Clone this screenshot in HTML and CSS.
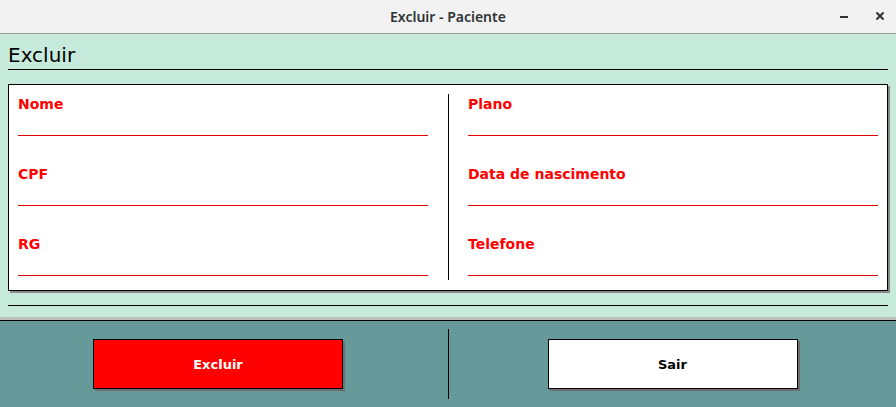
FILE: index.html
```html
<!DOCTYPE html>
<html lang="pt">
<head>
    <meta charset="UTF-8">
    <meta name="viewport" content="width=device-width, initial-scale=1.0">
    <title>Excluir - Paciente</title>
    <link rel="stylesheet" href="styles.css">
</head>
<body>
    <div class="janela">
        <div class="barra-titulo">
            <span class="titulo">Excluir - Paciente</span>
            <div class="controles-janela">
                <svg class="icone" width="16" height="16" viewBox="0 0 16 16">
                    <rect x="4" y="8" width="8" height="2" fill="#2e3436"/>
                </svg>
                <svg class="icone" width="16" height="16" viewBox="0 0 16 16">
                    <path d="M4.5 4.5 L11.5 11.5 M11.5 4.5 L4.5 11.5" stroke="#2e3436" stroke-width="2" fill="none"/>
                </svg>
            </div>
        </div>

        <div class="painel">
            <h1 class="cabecalho">Excluir</h1>

            <div class="cartao">
                <div class="coluna">
                    <div class="campo">
                        <label>Nome</label>
                        <div class="linha-campo"></div>
                    </div>
                    <div class="campo">
                        <label>CPF</label>
                        <div class="linha-campo"></div>
                    </div>
                    <div class="campo">
                        <label>RG</label>
                        <div class="linha-campo"></div>
                    </div>
                </div>
                <div class="divisor"></div>
                <div class="coluna">
                    <div class="campo">
                        <label>Plano</label>
                        <div class="linha-campo"></div>
                    </div>
                    <div class="campo">
                        <label>Data de nascimento</label>
                        <div class="linha-campo"></div>
                    </div>
                    <div class="campo">
                        <label>Telefone</label>
                        <div class="linha-campo"></div>
                    </div>
                </div>
            </div>

            <div class="separador"></div>
        </div>

        <div class="rodape">
            <div class="celula celula-esquerda">
                <button class="botao botao-excluir">Excluir</button>
            </div>
            <div class="divisor-rodape"></div>
            <div class="celula">
                <button class="botao botao-sair">Sair</button>
            </div>
        </div>
    </div>
</body>
</html>
```

FILE: styles.css
```css
body {
    margin: 0;
    padding: 0;
    font-family: 'DejaVu Sans', sans-serif;
    background-color: #669999;
    overflow: hidden;
}

.janela {
    width: 896px;
    height: 407px;
    display: flex;
    flex-direction: column;
}

/* Barra de titulo */
.barra-titulo {
    height: 33px;
    background-color: #f2f2f2;
    border-bottom: 1px solid #9c9c9c;
    display: flex;
    align-items: center;
    justify-content: center;
    position: relative;
}

.titulo {
    font-family: 'Noto Sans', sans-serif;
    font-size: 14px;
    font-weight: 600;
    color: #2e3436;
}

.controles-janela {
    position: absolute;
    right: 8px;
    top: 8px;
    display: flex;
    gap: 20px;
}

/* Painel verde */
.painel {
    background-color: #c6eadb;
    padding: 0 8px 11px 8px;
    border-bottom: 3px solid #bdbdbd;
}

.cabecalho {
    margin: 0;
    height: 36px;
    box-sizing: border-box;
    padding-top: 9px;
    font-size: 20px;
    font-weight: normal;
    line-height: 24px;
    color: #000;
    border-bottom: 1px solid #000;
}

.cartao {
    margin-top: 14px;
    background: white;
    border: 1px solid #000;
    box-shadow: 2px 2px 0 #8a8a8a;
    padding: 9px 8px 10px 9px;
    display: grid;
    grid-template-columns: 410px 40px 410px;
    align-items: start;
}

.coluna {
    display: flex;
    flex-direction: column;
    gap: 28px;
}

.campo label {
    display: block;
    margin-top: 2px;
    font-size: 14px;
    font-weight: bold;
    line-height: 16px;
    color: #ff0000;
}

.linha-campo {
    height: 23px;
    border-bottom: 1px solid #e00000;
}

.divisor {
    width: 1px;
    height: 186px;
    margin-left: 20px;
    background: #000;
}

.separador {
    margin-top: 14px;
    border-top: 1px solid #000;
}

/* Rodape */
.rodape {
    flex: 1;
    border-top: 1px solid #000;
    background-color: #669999;
    display: grid;
    grid-template-columns: 448px 1px 1fr;
    align-items: center;
}

.celula {
    display: flex;
    justify-content: center;
}

.celula-esquerda {
    padding-right: 12px;
}

.divisor-rodape {
    width: 1px;
    height: 70px;
    background: #000;
}

.botao {
    width: 250px;
    height: 50px;
    border: 1px solid #000;
    box-shadow: 2px 2px 0 #6e6e6e;
    font-family: 'DejaVu Sans', sans-serif;
    font-size: 13px;
    font-weight: bold;
    cursor: pointer;
}

.botao-excluir {
    background-color: #ff0000;
    color: white;
}

.botao-sair {
    background-color: white;
    color: #000;
}
```
